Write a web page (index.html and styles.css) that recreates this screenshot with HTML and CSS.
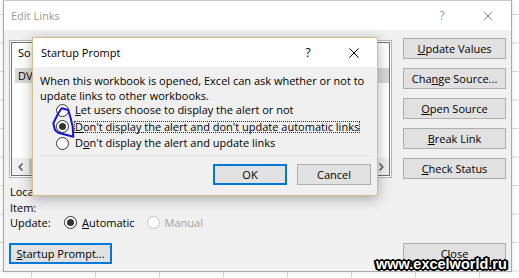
FILE: index.html
```html
<!DOCTYPE html>
<html lang="en">

<head>
    <meta charset="UTF-8">
    <meta name="viewport" content="width=device-width, initial-scale=1.0">
    <title>Edit Links</title>
    <link rel="stylesheet" href="styles.css">
</head>

<body>
    <section class="window links">
        <div class="titlebar titlebar--inactive">
            <span class="titlebar__title">Edit Links</span>
            <span class="titlebar__btn">?</span>
            <span class="titlebar__btn">
                <svg width="10" height="10" viewBox="0 0 10 10"><path d="M0.5 0.5 L9.5 9.5 M9.5 0.5 L0.5 9.5" /></svg>
            </span>
        </div>

        <div class="links__body">
            <div class="links__main">
                <div class="listbox">
                    <div class="listbox__inner">
                        <div class="listbox__head">So</div>
                        <div class="listbox__row">DV</div>
                        <div class="listbox__fill"></div>
                        <div class="scrollbar">
                            <span class="scrollbar__arrow">
                                <svg width="6" height="8" viewBox="0 0 6 8"><path d="M4.5 0.5 L1.2 4 L4.5 7.5" /></svg>
                            </span>
                            <span class="scrollbar__thumb"></span>
                            <span class="scrollbar__track"></span>
                            <span class="scrollbar__arrow">
                                <svg width="6" height="8" viewBox="0 0 6 8"><path d="M1.5 0.5 L4.8 4 L1.5 7.5" /></svg>
                            </span>
                        </div>
                    </div>
                </div>

                <div class="details">
                    <div class="details__row">Loca</div>
                    <div class="details__row">Item:</div>
                    <div class="details__row">
                        <span class="details__label">Update:</span>
                        <span class="radio radio--checked"></span>
                        <span class="choice"><u>A</u>utomatic</span>
                        <span class="radio radio--disabled"></span>
                        <span class="choice choice--disabled">Manual</span>
                    </div>
                </div>

                <button class="btn btn--focus btn--startup"><span><u>S</u>tartup Prompt...</span></button>
            </div>

            <div class="links__side">
                <button class="btn"><span><u>U</u>pdate Values</span></button>
                <button class="btn"><span>Cha<u>n</u>ge Source...</span></button>
                <button class="btn"><span><u>O</u>pen Source</span></button>
                <button class="btn"><span><u>B</u>reak Link</span></button>
                <button class="btn"><span><u>C</u>heck Status</span></button>
                <button class="btn btn--close"><span>Close</span></button>
            </div>
        </div>
    </section>

    <!-- modal prompt sits over the Edit Links window -->
    <section class="window prompt">
        <div class="titlebar">
            <span class="titlebar__title">Startup Prompt</span>
            <span class="titlebar__btn">?</span>
            <span class="titlebar__btn">
                <svg width="10" height="10" viewBox="0 0 10 10"><path d="M0.5 0.5 L9.5 9.5 M9.5 0.5 L0.5 9.5" /></svg>
            </span>
        </div>

        <div class="prompt__body">
            <p class="prompt__text">When this workbook is opened, Excel can ask whether or not to<br>update links to other workbooks.</p>

            <div class="options">
                <div class="option">
                    <span class="radio"></span>
                    <span class="option__label"><u>L</u>et users choose to display the alert or not</span>
                </div>
                <div class="option">
                    <span class="radio radio--checked"></span>
                    <span class="option__label option__label--focus"><u>D</u>on't display the alert and don't update automatic links</span>
                </div>
                <div class="option">
                    <span class="radio"></span>
                    <span class="option__label">D<u>o</u>n't display the alert and update links</span>
                </div>
            </div>

            <div class="separator"></div>

            <div class="actions">
                <button class="btn btn--focus btn--action"><span>OK</span></button>
                <button class="btn btn--action"><span>Cancel</span></button>
            </div>
        </div>
    </section>

    <svg class="scribble" width="519" height="278" viewBox="0 0 519 278">
        <path d="M61.7 108.3 L68.3 110 L70.7 118.3 L72.7 126.7 L73.3 136.7 L58.3 132.7 L55 130 L53.3 123.3 L58.3 113.3 L61.7 108.3 L65 109" />
    </svg>

    <div class="watermark">www.excelworld.ru</div>
</body>

</html>
```

FILE: styles.css
```css
* {
    box-sizing: border-box;
}

body {
    position: relative;
    width: 519px;
    height: 278px;
    margin: 0;
    overflow: hidden;
    font-family: 'Open Sans', 'Noto Sans', sans-serif;
    font-size: 11px;
    color: #000000;
    background-color: #ffffff;
    background-image:
        linear-gradient(to right, #dadada 1px, transparent 1px),
        linear-gradient(to bottom, #dadada 1px, transparent 1px);
    background-size: 64px 28.5px;
    background-position: 31px 14px;
}

u {
    text-underline-offset: 1px;
}

/* window chrome */

.window {
    display: flex;
    flex-direction: column;
    background-color: #f0f0f0;
}

.titlebar {
    display: flex;
    align-items: center;
    height: 29px;
    background-color: #ffffff;
    flex: none;
}

.titlebar__title {
    flex: 1;
    padding-left: 7px;
}

.titlebar__btn {
    display: flex;
    align-items: center;
    justify-content: center;
    width: 46px;
    height: 29px;
    font-size: 12px;
}

.titlebar__btn svg {
    stroke: #000000;
    stroke-width: 1;
    fill: none;
}

.titlebar--inactive {
    color: #9a9a9a;
}

.titlebar--inactive .titlebar__btn svg {
    stroke: #8c8c8c;
}

/* edit links */

.links {
    width: 509px;
    height: 272px;
    margin-left: 3px;
    border: 1px solid #a9a9a9;
    border-top-color: #c9c9c9;
    box-shadow: 0 0 5px rgba(0, 0, 0, 0.12);
}

.links__body {
    flex: 1;
    display: flex;
    gap: 11px;
    padding: 8px 5px 7px 5px;
}

.links__main {
    flex: 0 0 383px;
    display: flex;
    flex-direction: column;
}

.links__side {
    flex: 0 0 103px;
    display: flex;
    flex-direction: column;
    gap: 9px;
}

.listbox {
    height: 138px;
    margin-top: 2px;
    padding: 1px;
    border: 1px solid #b4b4b4;
    background-color: #ffffff;
}

.listbox__inner {
    display: flex;
    flex-direction: column;
    height: 100%;
    border: 1px solid #6f6f6f;
}

.listbox__head {
    height: 20px;
    line-height: 20px;
    padding-left: 6px;
}

.listbox__row {
    height: 15px;
    line-height: 15px;
    margin: 5px 0 0 3px;
    padding-left: 3px;
    background-color: #d9d9d9;
}

.listbox__fill {
    flex: 1;
}

.scrollbar {
    display: flex;
    height: 17px;
    background-color: #f0f0f0;
}

.scrollbar__arrow {
    display: flex;
    align-items: center;
    justify-content: center;
    width: 17px;
}

.scrollbar__arrow svg {
    stroke: #606060;
    stroke-width: 1.6;
    fill: none;
}

.scrollbar__thumb {
    width: 320px;
    margin: 1px 0;
    background-color: #cdcdcd;
}

.scrollbar__track {
    flex: 1;
}

.details {
    margin-top: 6px;
}

.details__row {
    display: flex;
    align-items: center;
    height: 15.5px;
    padding-left: 1px;
}

.details__label {
    width: 54px;
}

.choice {
    margin-left: 5px;
}

.choice--disabled {
    color: #a0a0a0;
}

.choice + .radio {
    margin-left: 12px;
}

.radio {
    display: inline-flex;
    align-items: center;
    justify-content: center;
    flex: none;
    width: 13px;
    height: 13px;
    border: 1px solid #333333;
    border-radius: 50%;
    background-color: #ffffff;
}

.radio--checked::after {
    content: '';
    width: 7px;
    height: 7px;
    border-radius: 50%;
    background-color: #333333;
}

.radio--disabled {
    border-color: #c4c4c4;
}

/* buttons */

.btn {
    display: flex;
    align-items: center;
    justify-content: center;
    height: 21px;
    padding: 0;
    border: 1px solid #adadad;
    background-color: #e1e1e1;
    font: inherit;
    color: #000000;
}

.btn--focus {
    border: 2px solid #0078d7;
}

.btn--startup {
    width: 103px;
    margin-top: auto;
}

.btn--close {
    margin-top: auto;
}

.btn--action {
    width: 74px;
}

/* startup prompt */

.prompt {
    position: absolute;
    left: 32px;
    top: 37px;
    width: 346px;
    height: 159px;
    border: 1px solid #d9bb88;
    box-shadow: 0 3px 12px rgba(0, 0, 0, 0.3);
}

.prompt .titlebar__title {
    padding-left: 8px;
}

.prompt__body {
    padding: 6px 6px 0 7px;
}

.prompt__text {
    margin: 0;
    line-height: 15px;
    white-space: nowrap;
}

.options {
    margin: -1px 0 0 16px;
}

.option {
    display: flex;
    align-items: center;
    gap: 5px;
    height: 16.5px;
}

.option__label {
    display: inline-block;
    line-height: 10px;
    border: 1px solid transparent;
    white-space: nowrap;
}

.option__label--focus {
    border: 1px dotted #303030;
}

.separator {
    height: 1px;
    margin-top: 3px;
    background-color: #dfdfdf;
}

.actions {
    display: flex;
    justify-content: flex-end;
    gap: 10px;
    margin-top: 8px;
}

/* overlays */

.scribble {
    position: absolute;
    left: 0;
    top: 0;
    pointer-events: none;
}

.scribble path {
    fill: none;
    stroke: #1414d2;
    stroke-width: 2;
    stroke-linejoin: round;
    stroke-linecap: round;
}

.watermark {
    position: absolute;
    left: 376px;
    top: 257px;
    font-family: 'Liberation Sans', Arial, sans-serif;
    font-weight: bold;
    font-size: 14.5px;
    line-height: 15px;
    color: #ffffff;
    text-shadow:
        -2px 0 #000, 2px 0 #000, 0 -2px #000, 0 2px #000,
        -1px -1px #000, 1px -1px #000, -1px 1px #000, 1px 1px #000,
        -2px -1px #000, 2px -1px #000, -2px 1px #000, 2px 1px #000;
}
```
